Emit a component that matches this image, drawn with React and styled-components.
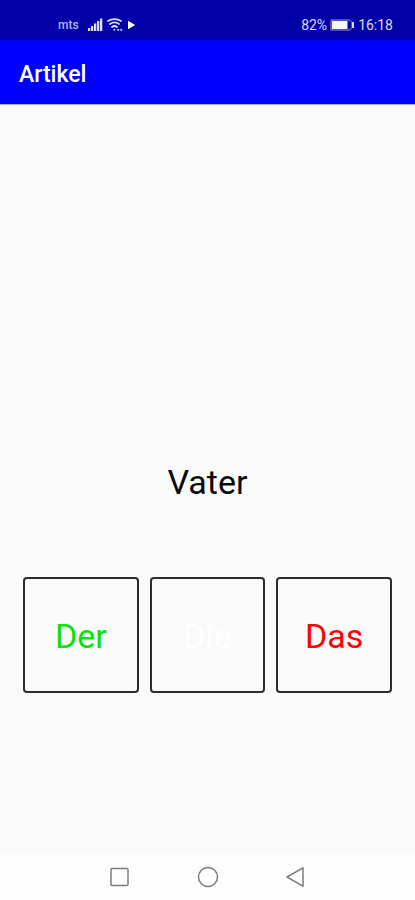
import React from "react";
import styled, { createGlobalStyle } from "styled-components";

const GlobalStyle = createGlobalStyle`
  * { box-sizing: border-box; }
  body {
    margin: 0;
    background: #fafafa;
    font-family: Roboto, "Liberation Sans", sans-serif;
  }
`;

const Screen = styled.div`
  display: flex;
  flex-direction: column;
  min-height: 100vh;
`;

const StatusBar = styled.div`
  display: flex;
  align-items: center;
  justify-content: space-between;
  height: 40px;
  padding: 10px 22px 0 58px;
  background: #0000a6;
  color: #dcdcfa;
`;

const StatusGroup = styled.div`
  display: flex;
  align-items: center;
  gap: ${({ $gap }) => $gap}px;
  font-size: 14px;
  line-height: 16px;
`;

const Carrier = styled.span`
  width: 26px;
  font-size: 12px;
  font-weight: 500;
  line-height: 16px;
  color: #b4b4ee;
`;

const Icon = styled.svg`
  display: block;
  flex: none;
`;

const AppBar = styled.header`
  display: flex;
  align-items: center;
  height: 65px;
  padding: 5px 19px 0;
  background: #0000ff;
  border-bottom: 1px solid #a6a6f8;
`;

const Title = styled.h1`
  margin: 0;
  font-size: 23px;
  font-weight: 500;
  line-height: 28px;
  color: #ffffff;
`;

const Quiz = styled.main`
  flex: 1;
  display: grid;
  grid-template-rows: 1fr auto 1fr;
  padding: 5px 23px 0;
`;

const Word = styled.p`
  grid-row: 2;
  margin: 0;
  text-align: center;
  font-size: 34px;
  line-height: 44px;
  color: #0a0a0a;
`;

const Answers = styled.div`
  grid-row: 3;
  display: grid;
  grid-template-columns: repeat(3, 1fr);
  gap: 11px;
  align-items: start;
  padding-top: 73px;
`;

const Answer = styled.button`
  aspect-ratio: 1;
  padding: 3px 0 0;
  border: 2px solid #2c2c2c;
  border-radius: 4px;
  background: transparent;
  font-family: inherit;
  font-size: 34px;
  line-height: 44px;
  color: ${({ $color }) => $color};
`;

const NavBar = styled.nav`
  display: flex;
  align-items: center;
  justify-content: center;
  gap: 64px;
  height: 46px;
  background: #fdfdfd;
`;

const NavButton = styled.button`
  display: flex;
  padding: 0;
  border: 0;
  background: none;
  color: #7c7c7c;
`;

const ARTICLES = [
  { label: "Der", color: "#08e308" },
  { label: "Die", color: "#ffffff" },
  { label: "Das", color: "#fa0505" },
];

function SignalIcon() {
  return (
    <Icon width="15" height="14" viewBox="0 0 15 14" fill="currentColor" aria-hidden="true">
      <path d="M0 10h2.300v3H0zM3 8h2.300v5H3zM6 5.500h2.300V13H6zM9 3h2.300v10H9zM12 .5h2.300V13H12z" />
    </Icon>
  );
}

function WifiIcon() {
  return (
    <Icon width="17" height="14" viewBox="0 0 17 14" fill="none" stroke="currentColor" strokeWidth="1.7" strokeLinecap="round" aria-hidden="true">
      <path d="M1 3C4.500.5 10.500.5 14 3" />
      <path d="M3 6c2.700-2 6.300-2 9 0" />
      <path d="M5 9c1.500-1.200 3.500-1.200 5 0" />
      <path d="M7.500 11.500v.5M11 11.800h.5M14 11.800h.5" />
    </Icon>
  );
}

function PlayIcon() {
  return (
    <Icon width="8" height="10" viewBox="0 0 8 10" fill="#ffffff" aria-hidden="true">
      <path d="M0 .8L7.200 5 0 9.200z" />
    </Icon>
  );
}

function BatteryIcon() {
  return (
    <Icon width="25" height="12" viewBox="0 0 25 12" aria-hidden="true">
      <path d="M1 1h18.500L22 3.500v5L19.500 11H1z" fill="none" stroke="#9c9ce2" />
      <path d="M2 2h15.500v8H2z" fill="#f4f4ff" />
      <path d="M22 3h2v6h-2z" fill="#dcdcfa" />
    </Icon>
  );
}

function NavIcon({ children }) {
  return (
    <Icon width="24" height="24" viewBox="0 0 24 24" fill="none" stroke="currentColor" strokeWidth="1.5" strokeLinejoin="round" aria-hidden="true">
      {children}
    </Icon>
  );
}

export default function App() {
  return (
    <>
      <GlobalStyle />
      <Screen>
        <StatusBar>
          <StatusGroup $gap={4}>
            <Carrier>mts</Carrier>
            <SignalIcon />
            <WifiIcon />
            <PlayIcon />
          </StatusGroup>
          <StatusGroup $gap={3}>
            <span>82%</span>
            <BatteryIcon />
            <span>16:18</span>
          </StatusGroup>
        </StatusBar>
        <AppBar>
          <Title>Artikel</Title>
        </AppBar>
        <Quiz>
          <Word>Vater</Word>
          <Answers>
            {ARTICLES.map(({ label, color }) => (
              <Answer key={label} type="button" $color={color}>
                {label}
              </Answer>
            ))}
          </Answers>
        </Quiz>
        <NavBar>
          <NavButton type="button" aria-label="Recent apps">
            <NavIcon>
              <rect x="3" y="3.500" width="17" height="17" rx="1" />
            </NavIcon>
          </NavButton>
          <NavButton type="button" aria-label="Home">
            <NavIcon>
              <circle cx="12" cy="12" r="9.500" />
            </NavIcon>
          </NavButton>
          <NavButton type="button" aria-label="Back">
            <NavIcon>
              <path d="M19 2.800v18.400L3 12z" />
            </NavIcon>
          </NavButton>
        </NavBar>
      </Screen>
    </>
  );
}
